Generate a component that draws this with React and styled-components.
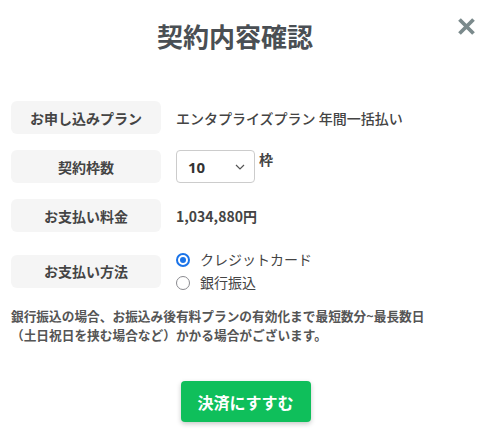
import React, { useState } from "react";
import styled, { createGlobalStyle } from "styled-components";

const GlobalStyle = createGlobalStyle`
  body {
    margin: 0;
    background: #fff;
    font-family: "Noto Sans CJK JP", "Noto Sans", sans-serif;
    color: #444;
  }
`;

const Modal = styled.div`
  position: relative;
  width: 491px;
  height: 443px;
  box-sizing: border-box;
  padding: 17px 11px 0;
`;

const Title = styled.h1`
  margin: 0;
  padding-right: 21px;
  text-align: center;
  font-size: 26px;
  line-height: 37px;
  font-weight: 700;
  color: #4a4f54;
`;

const CloseButton = styled.button`
  position: absolute;
  top: 14px;
  right: 13px;
  width: 24px;
  height: 24px;
  padding: 0;
  border: none;
  background: none;
  cursor: pointer;
  display: flex;
  align-items: center;
  justify-content: center;
`;

const Rows = styled.div`
  display: flex;
  flex-direction: column;
  gap: 16px;
  margin-top: 47px;
`;

const Row = styled.div`
  display: flex;
  align-items: center;
  gap: 15px;
`;

const Label = styled.div`
  width: 150px;
  height: 33px;
  flex-shrink: 0;
  display: flex;
  align-items: center;
  justify-content: center;
  background: #f5f5f5;
  border-radius: 6px;
  font-size: 14px;
  font-weight: 700;
  color: #444;
`;

const Value = styled.div`
  font-size: 14px;
  font-weight: ${({ $bold }) => ($bold ? 700 : 500)};
  color: #444;
`;

const SelectWrap = styled.div`
  display: flex;
  align-items: flex-start;
  gap: 4px;
`;

const Select = styled.select`
  width: 79px;
  height: 33px;
  padding: 0 11px;
  border: 1px solid #ccc;
  border-radius: 4px;
  background: #fff;
  font-family: "Noto Sans", sans-serif;
  font-size: 15px;
  font-weight: 700;
  color: #333;
  appearance: none;
  background-image: url("data:image/svg+xml;utf8,<svg xmlns='http://www.w3.org/2000/svg' width='10' height='6' viewBox='0 0 10 6'><path d='M1 1l4 4 4-4' fill='none' stroke='%23555' stroke-width='1.2'/></svg>");
  background-repeat: no-repeat;
  background-position: right 9px center;
`;

const Unit = styled.span`
  font-size: 14px;
  font-weight: 700;
  line-height: 18px;
`;

const RadioGroup = styled.div`
  display: flex;
  flex-direction: column;
  gap: 2px;
  padding: 1px 0;
`;

const RadioItem = styled.label`
  display: flex;
  align-items: center;
  gap: 10px;
  font-size: 14px;
  line-height: 21px;
  color: #444;
  cursor: pointer;
`;

const RadioDot = styled.span`
  width: 14px;
  height: 14px;
  box-sizing: border-box;
  border-radius: 50%;
  border: ${({ $checked }) => ($checked ? "2px solid #1a73e8" : "1.5px solid #8a8a8f")};
  display: flex;
  align-items: center;
  justify-content: center;
  &::after {
    content: "";
    width: 6px;
    height: 6px;
    border-radius: 50%;
    background: ${({ $checked }) => ($checked ? "#1a73e8" : "transparent")};
  }
`;

const Note = styled.p`
  margin: 12px 0 0;
  font-size: 12.7px;
  line-height: 19px;
  font-weight: 700;
  color: #555;
`;

const Footer = styled.div`
  display: flex;
  justify-content: center;
  margin-top: 37px;
`;

const SubmitButton = styled.button`
  width: 130px;
  height: 41px;
  border: none;
  border-radius: 4px;
  background: #0fbf5b;
  color: #fff;
  font-family: "Noto Sans CJK JP", sans-serif;
  font-size: 16px;
  font-weight: 700;
  box-shadow: 0 2px 5px rgba(0, 0, 0, 0.22);
  cursor: pointer;
`;

export default function App() {
  const [method, setMethod] = useState("card");
  const [count, setCount] = useState("10");

  return (
    <>
      <GlobalStyle />
      <Modal>
        <Title>契約内容確認</Title>
        <CloseButton aria-label="閉じる">
          <svg width="19" height="19" viewBox="0 0 19 19">
            <path d="M2.5 2.5l14 14M16.5 2.5l-14 14" stroke="#7b8a8c" strokeWidth="3.8" strokeLinecap="butt" />
          </svg>
        </CloseButton>
        <Rows>
          <Row>
            <Label>お申し込みプラン</Label>
            <Value>エンタプライズプラン 年間一括払い</Value>
          </Row>
          <Row>
            <Label>契約枠数</Label>
            <SelectWrap>
              <Select value={count} onChange={(e) => setCount(e.target.value)}>
                {[5, 10, 15, 20].map((n) => (
                  <option key={n} value={n}>{n}</option>
                ))}
              </Select>
              <Unit>枠</Unit>
            </SelectWrap>
          </Row>
          <Row>
            <Label>お支払い料金</Label>
            <Value $bold>1,034,880円</Value>
          </Row>
          <Row>
            <Label>お支払い方法</Label>
            <RadioGroup>
              <RadioItem onClick={() => setMethod("card")}>
                <RadioDot $checked={method === "card"} />
                クレジットカード
              </RadioItem>
              <RadioItem onClick={() => setMethod("bank")}>
                <RadioDot $checked={method === "bank"} />
                銀行振込
              </RadioItem>
            </RadioGroup>
          </Row>
        </Rows>
        <Note>
          銀行振込の場合、お振込み後有料プランの有効化まで最短数分~最長数日
          <br />
          （土日祝日を挟む場合など）かかる場合がございます。
        </Note>
        <Footer>
          <SubmitButton>決済にすすむ</SubmitButton>
        </Footer>
      </Modal>
    </>
  );
}
